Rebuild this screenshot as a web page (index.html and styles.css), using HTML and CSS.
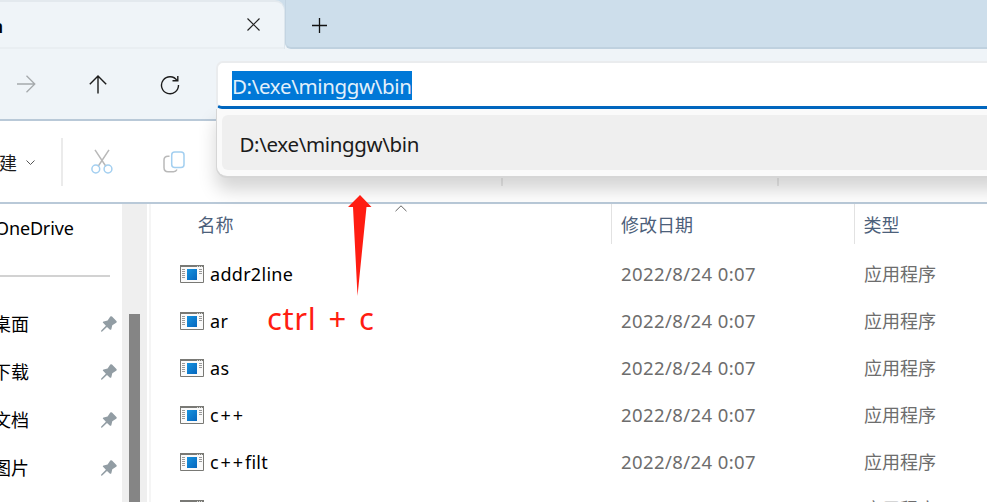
FILE: index.html
```html
<!DOCTYPE html>
<html lang="zh-CN">
<head>
<meta charset="utf-8">
<title>bin</title>
<link rel="stylesheet" href="styles.css">
</head>
<body>
<svg class="defs" width="0" height="0" aria-hidden="true">
  <defs>
    <linearGradient id="blue" x1="0" y1="0" x2="1" y2="1"><stop offset="0" stop-color="#1593e0"/><stop offset="1" stop-color="#0666bd"/></linearGradient>
    <symbol id="app" viewBox="0 0 24 18">
      <path fill="#fafafa" stroke="#797975" d="M.5.5h23v17H.5z"/>
      <path fill="#797975" d="M0 0h24v2H0z"/>
      <path stroke="#d5d5d2" d="M17 1.5h1M19 1.5h1M21 1.5h1"/>
      <path stroke="#9a9a9a" d="M2 4.500h3M2 6.500h3M2 8.500h3M2 10.500h3M2 12.500h3M19 4.500h3M19 6.500h3M19 8.500h3"/>
      <path fill="url(#blue)" d="M7 4h10v11H7z"/>
    </symbol>
    <symbol id="pin" viewBox="0 0 16 16">
      <path fill="#929da4" d="M9.300.5Q10.200-.2 11 .6L15.400 5Q16.200 5.900 15.200 6.700L11.300 9.300L10.400 13Q9.900 14.500 8.700 13.400L6 10.900L1.200 15.600L0 15.700L.2 14.400L4.900 9.700L2.300 7.100Q1.200 5.800 2.700 5.400L6.600 4.500Z"/>
    </symbol>
  </defs>
</svg>
<div class="window">
  <header class="titlebar">
    <div class="tab">
      <span class="tab-title">bin</span>
      <svg class="tab-close" width="13" height="13" viewBox="0 0 13 13"><path d="M.5.5l12 12M12.500.5l-12 12"/></svg>
    </div>
    <div class="strip">
      <svg class="tab-add" width="15" height="15" viewBox="0 0 15 15"><path d="M7.500 0v15M0 7.500h15"/></svg>
    </div>
  </header>

  <nav class="navbar">
    <svg class="forward" width="19" height="18" viewBox="0 0 19 18"><path d="M0 9h17.500M9.500.8L17.800 9l-8.300 8.200"/></svg>
    <svg class="up" width="18" height="19" viewBox="0 0 18 19"><path d="M9 18.500V1M.8 9.200L9 1l8.200 8.200"/></svg>
    <svg class="reload" width="20" height="20" viewBox="0 0 20 20"><path d="M17.100 5.600A8.500 8.500 0 1 0 18.500 10M17.800 1v4.800h-5.300"/></svg>
    <div class="address">
      <div class="field"><span class="selected">D:\exe\minggw\bin</span></div>
      <div class="suggestions"><div class="suggestion">D:\exe\minggw\bin</div></div>
    </div>
  </nav>

  <div class="commands">
    <span class="new">新建</span>
    <svg class="chevron" width="9" height="5" viewBox="0 0 9 5"><path d="M.5.5l4 4 4-4"/></svg>
    <i class="rule first"></i>
    <svg class="cut" width="22" height="25" viewBox="0 0 22 25"><path stroke="#b9b9b9" d="M4 .8l11 16.700M18 .8L7 17.500"/><g stroke="#a3cff0"><circle cx="4.800" cy="20" r="3.900"/><circle cx="17" cy="20" r="3.900"/></g></svg>
    <svg class="copy" width="22" height="22" viewBox="0 0 22 22"><path stroke="#b9b9b9" d="M6.500 5.200H5Q1 5.200 1 9v7.500Q1 20.700 5 20.700h5.500Q13 20.700 14 18.500"/><rect stroke="#a3cff0" x="8.700" y="1" width="12.300" height="15.500" rx="3"/></svg>
    <i class="rule second"></i>
    <i class="rule third"></i>
  </div>

  <div class="content">
    <aside class="sidebar">
      <div class="drive">OneDrive</div>
      <hr>
      <div class="place"><span>桌面</span><svg width="16" height="16"><use href="#pin"/></svg></div>
      <div class="place"><span>下载</span><svg width="16" height="16"><use href="#pin"/></svg></div>
      <div class="place"><span>文档</span><svg width="16" height="16"><use href="#pin"/></svg></div>
      <div class="place"><span>图片</span><svg width="16" height="16"><use href="#pin"/></svg></div>
    </aside>
    <div class="scrollbar"><div class="thumb"></div></div>
    <main class="files">
      <div class="row head">
        <span class="name">名称</span><span class="date">修改日期</span><span class="type">类型</span>
        <svg class="sort" width="12" height="7" viewBox="0 0 12 7"><path d="M.5 6.200L6 .8l5.500 5.400"/></svg>
      </div>
      <div class="row"><span class="name"><svg width="24" height="18"><use href="#app"/></svg>addr2line</span><span class="date">2022/8/24 0:07</span><span class="type">应用程序</span></div>
      <div class="row"><span class="name"><svg width="24" height="18"><use href="#app"/></svg>ar</span><span class="date">2022/8/24 0:07</span><span class="type">应用程序</span></div>
      <div class="row"><span class="name"><svg width="24" height="18"><use href="#app"/></svg>as</span><span class="date">2022/8/24 0:07</span><span class="type">应用程序</span></div>
      <div class="row"><span class="name wide"><svg width="24" height="18"><use href="#app"/></svg><span class="wide">c++</span></span><span class="date">2022/8/24 0:07</span><span class="type">应用程序</span></div>
      <div class="row"><span class="name"><svg width="24" height="18"><use href="#app"/></svg><span><span class="wide">c++</span>filt</span></span><span class="date">2022/8/24 0:07</span><span class="type">应用程序</span></div>
      <div class="row"><span class="name"><svg width="24" height="18"><use href="#app"/></svg></span><span class="date"></span><span class="type">应用程序</span></div>
    </main>
  </div>

  <div class="note">
    <svg width="24" height="101" viewBox="0 0 24 101"><path d="M12 0L23.500 12H18.500L9.500 101 5 12H0Z"/></svg>
    <span>ctrl + c</span>
  </div>
</div>
</body>
</html>
```
FILE: styles.css
```css
* { box-sizing: border-box; }
body {
  margin: 0;
  font-family: "Noto Sans", "Noto Sans CJK SC", sans-serif;
  font-size: 18px;
  color: #000;
  background: #fff;
}
svg { display: block; flex: none; fill: none; }
.defs { position: absolute; }
.window {
  position: relative;
  width: 987px;
  height: 502px;
  overflow: hidden;
  display: flex;
  flex-direction: column;
  white-space: nowrap;
}

.titlebar {
  height: 49px;
  flex: none;
  display: flex;
  background: linear-gradient(#cddeeb 24px, #eff4f8 24px);
}
.tab {
  width: 285px;
  height: 49px;
  padding-top: 1px;
  display: flex;
  align-items: center;
  background: linear-gradient(#eff4f8 45px, #e9eef2 45px);
  border-top: 2px solid #e3e9ee;
  border-right: 1px solid #dde6ed;
  border-top-right-radius: 10px;
}
.strip {
  flex: 1;
  background: #cddeeb;
  border-bottom: 2px solid #bfd1df;
  border-left: 1px solid #c3d4e2;
  border-bottom-left-radius: 6px;
}
.tab-title { width: 3px; display: flex; justify-content: flex-end; font-size: 17px; font-weight: 600; }
.tab-close { margin-left: 243.5px; margin-top: -3px; stroke: #222; stroke-width: 1.2; }
.tab-add { margin: 18px 0 0 26px; stroke: #111; stroke-width: 1.3; }

.navbar {
  height: 72px;
  flex: none;
  display: flex;
  background: #eff4f8;
  border-bottom: 2px solid #b9c9d8;
}
.navbar svg { stroke: #1c1c1c; stroke-width: 1.4; }
.navbar .forward { margin: 26px 0 0 17px; stroke: #a5a9ac; stroke-width: 1.3; }
.up { margin: 26px 0 0 52.5px; }
.reload { margin: 26px 0 0 53.5px; }
.address { position: relative; margin: 12px 0 0 36px; flex: 1; z-index: 2; }
.field {
  height: 48px;
  margin-right: -10px;
  padding: 8px 0 0 14px;
  background: #fff;
  border: 2px solid #eaecee;
  border-right: 0;
  border-bottom: 3px solid #0067c0;
  border-radius: 7px 0 0 6px;
}
.selected {
  display: block;
  width: 180px;
  height: 29px;
  line-height: 30px;
  font-size: 20.5px;
  letter-spacing: -.35px;
  color: #e2f0fb;
  background: #0078d7;
}
.suggestions {
  position: absolute;
  top: 48px;
  left: 0;
  right: -20px;
  height: 69px;
  padding: 6px 0 6px 5px;
  background: #fafafa;
  border: solid #d6d6d6;
  border-width: 0 0 2px 1px;
  border-radius: 0 0 0 11px;
  box-shadow: 0 12px 18px rgba(0,0,0,.17);
}
.suggestion {
  height: 55px;
  padding-left: 17.500px;
  border-radius: 6px;
  background: #efefef;
  color: #1b1b1b;
  font-size: 20.5px;
  letter-spacing: -.35px;
  line-height: 59px;
}

.commands {
  height: 83px;
  flex: none;
  display: flex;
  align-items: center;
  border-bottom: 2px solid #b9c9d8;
}
.new { width: 36px; margin-left: -19px; color: #1b1b1b; }
.chevron { margin: 1px 0 0 9px; stroke: #555; }
.rule { width: 2px; height: 48px; background: #ebebeb; }
.first { margin-left: 26px; }
.cut { margin-left: 28px; stroke-width: 1.5; }
.copy { margin-left: 50px; stroke-width: 1.5; }
.second { margin-left: 316px; }
.third { margin-left: 274px; }

.content { flex: 1; min-height: 0; display: flex; }
.sidebar { width: 122px; flex: none; }
.drive { height: 71px; margin-left: -5px; line-height: 49px; letter-spacing: -.15px; }
hr { width: 110px; height: 2px; margin: 0 0 23px; border: 0; background: #d2d2d2; }
.place {
  height: 48px;
  margin-left: -7px;
  padding-right: 5px;
  display: flex;
  align-items: center;
  justify-content: space-between;
}
.place span { margin-top: -2px; }
.scrollbar { width: 25px; flex: none; padding: 110px 7px 0; background: #efefef; }
.thumb { height: 190px; background: #858585; }
.files { flex: 1; margin-left: 2px; border-left: 2px solid #f5f5f5; }
.row { height: 47px; display: flex; align-items: center; color: #6d6d6d; line-height: 26px; }
.name { width: 461px; padding-left: 29px; display: flex; align-items: center; gap: 6px; color: #000; letter-spacing: .3px; }
.wide { letter-spacing: 1.9px; }
.date { width: 243px; padding-left: 9px; font-size: 18.5px; letter-spacing: .4px; }
.type { padding-left: 9px; }
.row:not(.head) { margin-top: -1px; margin-bottom: 1px; }
.head { position: relative; height: 40px; margin-bottom: 7px; align-items: stretch; color: #4c607a; line-height: 42px; }
.head .name { width: 460px; padding-left: 46.5px; padding-top: 1px; color: #4c607a; letter-spacing: 0; }
.head .date { font-size: 18px; letter-spacing: 0; }
.head .date, .head .type { border-left: 1px solid #e2e2e2; }
.head .type { padding-left: 8.5px; }
.sort { position: absolute; left: 243.5px; top: 1px; stroke: #666; }

.note { position: absolute; left: 267px; top: 195px; z-index: 3; color: #ff1d12; font-size: 31px; line-height: 44px; letter-spacing: .6px; word-spacing: 3.5px; }
.note svg { margin-left: 81px; fill: #ff1d12; }
.note span { display: block; }
```
